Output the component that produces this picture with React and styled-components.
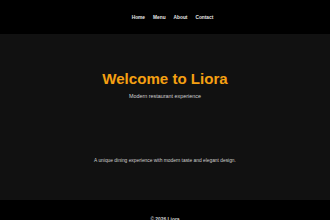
import React from "react";
import styled, { createGlobalStyle } from "styled-components";

const Global = createGlobalStyle`
  html, body { margin: 0; padding: 0; background: #000; }
  body { font-family: "Liberation Sans", Arial, sans-serif; overflow: hidden; }
`;

const Header = styled.header`
  height: 34px;
  background: #000;
  display: flex;
  align-items: center;
  justify-content: center;
  padding-left: 15px;
`;

const Nav = styled.nav`
  display: flex;
  gap: 8px;
`;

const NavLink = styled.a`
  color: #e6e6e6;
  font-size: 4.8px;
  font-weight: 700;
  text-decoration: none;
`;

const Main = styled.main`
  height: 166px;
  background: #111;
  box-sizing: border-box;
  padding-top: 36px;
  display: flex;
  flex-direction: column;
  align-items: center;
  text-align: center;
`;

const Title = styled.h1`
  margin: 0;
  color: #f5a012;
  font-size: 15.1px;
  font-weight: 700;
  line-height: 17px;
`;

const Subtitle = styled.p`
  margin: 6px 0 0;
  color: #cfcfcf;
  font-size: 5.4px;
`;

const Text = styled.p`
  margin: 59px 0 0;
  color: #cfcfcf;
  font-size: 4.86px;
`;

const Footer = styled.footer`
  background: #000;
  height: 40px;
  padding-top: 17px;
  box-sizing: border-box;
  text-align: center;
  color: #d0d0d0;
  font-size: 4.9px;
  font-weight: 700;
`;

export default function App() {
  return (
    <>
      <Global />
      <Header>
        <Nav>
          <NavLink href="#">Home</NavLink>
          <NavLink href="#">Menu</NavLink>
          <NavLink href="#">About</NavLink>
          <NavLink href="#">Contact</NavLink>
        </Nav>
      </Header>
      <Main>
        <Title>Welcome to Liora</Title>
        <Subtitle>Modern restaurant experience</Subtitle>
        <Text>A unique dining experience with modern taste and elegant design.</Text>
      </Main>
      <Footer>© 2026 Liora</Footer>
    </>
  );
}
